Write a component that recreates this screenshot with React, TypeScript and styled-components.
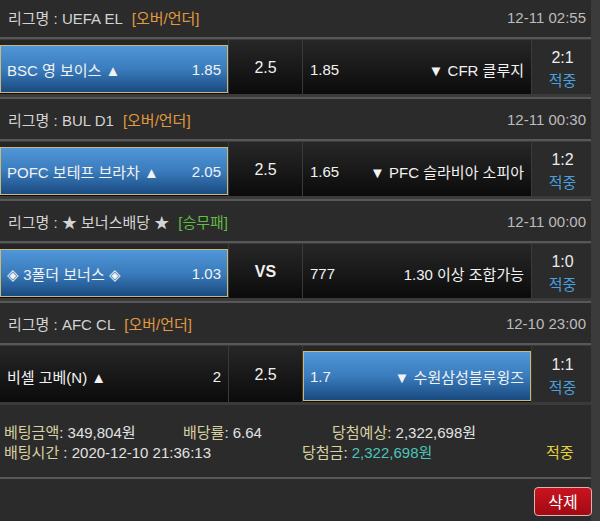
import React from "react";
import styled, { createGlobalStyle } from "styled-components";

const GlobalStyle = createGlobalStyle`
  html, body {
    margin: 0;
    padding: 0;
    background: #3b3b3b;
    overflow: hidden;
  }
  body {
    font-family: "Liberation Sans", "Noto Sans CJK KR", sans-serif;
  }
`;

type Side = "home" | "away" | "none";

interface Game {
  league: string;
  tag: string;
  tagColor: string;
  date: string;
  home: string;
  homeOdds: string;
  line: string;
  lineBold?: boolean;
  awayOdds: string;
  away: string;
  score: string;
  pick: Side;
}

const games: Game[] = [
  {
    league: "리그명 : UEFA EL",
    tag: "[오버/언더]",
    tagColor: "#e29a3f",
    date: "12-11 02:55",
    home: "BSC 영 보이스 ▲",
    homeOdds: "1.85",
    line: "2.5",
    awayOdds: "1.85",
    away: "▼ CFR 클루지",
    score: "2:1",
    pick: "home",
  },
  {
    league: "리그명 : BUL D1",
    tag: "[오버/언더]",
    tagColor: "#e29a3f",
    date: "12-11 00:30",
    home: "POFC 보테프 브라차 ▲",
    homeOdds: "2.05",
    line: "2.5",
    awayOdds: "1.65",
    away: "▼ PFC 슬라비아 소피아",
    score: "1:2",
    pick: "home",
  },
  {
    league: "리그명 : ★ 보너스배당 ★",
    tag: "[승무패]",
    tagColor: "#62bb45",
    date: "12-11 00:00",
    home: "◈ 3폴더 보너스 ◈",
    homeOdds: "1.03",
    line: "VS",
    lineBold: true,
    awayOdds: "777",
    away: "1.30 이상 조합가능",
    score: "1:0",
    pick: "home",
  },
  {
    league: "리그명 : AFC CL",
    tag: "[오버/언더]",
    tagColor: "#e29a3f",
    date: "12-10 23:00",
    home: "비셀 고베(N) ▲",
    homeOdds: "2",
    line: "2.5",
    awayOdds: "1.7",
    away: "▼ 수원삼성블루윙즈",
    score: "1:1",
    pick: "away",
  },
];

const Page = styled.div`
  width: 591px;
  margin-top: -3px;
  background: #2b2b2b;
  display: flex;
  flex-direction: column;
`;

const LeagueBar = styled.div`
  height: 40px;
  padding: 0 8px;
  display: flex;
  align-items: center;
  justify-content: space-between;
  font-size: 15px;
  color: #d4d4d4;
  border-bottom: 2px solid #585858;
`;

const LeagueName = styled.span`
  white-space: pre;
`;

const Tag = styled.span<{ $color: string }>`
  color: ${(p) => p.$color};
  margin-left: 9px;
`;

const DateText = styled.span`
  color: #bcbcbc;
  margin-right: -3px;
`;

const BetRow = styled.div<{ $last?: boolean }>`
  height: 60px;
  box-sizing: border-box;
  padding: 1px 0 3px;
  display: flex;
  gap: 1px;
  background: #3a3a3a;
  border-bottom: ${(p) => (p.$last ? "none" : "2px solid #585858")};
  & > :last-child {
    background: #2b2b2b;
  }
`;

const Cell = styled.div<{ $w: number }>`
  width: ${(p) => p.$w}px;
  flex: none;
  box-sizing: border-box;
  padding: 5px 0 1px;
  display: flex;
  background: linear-gradient(#272727, #0b0b0b);
`;

const Pick = styled.div<{ $on: boolean }>`
  flex: 1;
  display: flex;
  align-items: center;
  justify-content: space-between;
  padding: 0 6px;
  font-size: 15px;
  color: #f2f2f2;
  box-sizing: border-box;
  border: 1px solid ${(p) => (p.$on ? "#cdb976" : "transparent")};
  background: ${(p) =>
    p.$on ? "linear-gradient(#5096d8, #3a7cbd 50%, #1a4a80)" : "transparent"};
  white-space: nowrap;
`;

const LineText = styled.div<{ $bold?: boolean }>`
  flex: 1;
  display: flex;
  align-items: center;
  justify-content: center;
  font-size: 16px;
  font-weight: ${(p) => (p.$bold ? 700 : 400)};
  color: #f0f0f0;
  padding-bottom: 2px;
`;

const Result = styled.div`
  flex: 1;
  display: flex;
  flex-direction: column;
  align-items: center;
  justify-content: center;
  font-size: 16px;
  line-height: 23px;
  padding: 3px 0 0 2px;
  color: #ececec;
`;

const Hit = styled.span`
  color: #4a9fdc;
  font-size: 15px;
`;

const Summary = styled.div`
  padding: 18px 4px 14px;
  font-size: 15px;
  line-height: 20px;
  color: #e2e2e2;
  border-bottom: 2px solid #585858;
`;

const SummaryLine = styled.div`
  display: flex;
  white-space: nowrap;
`;

const Field = styled.span<{ $w?: number }>`
  width: ${(p) => (p.$w ? `${p.$w}px` : "auto")};
  flex: none;
`;

const Label = styled.span`
  color: #d8d1a1;
`;

const Teal = styled.span`
  color: #4ac5bb;
`;

const WinMark = styled.span`
  color: #e4d23c;
`;

const Footer = styled.div`
  height: 43px;
  display: flex;
  align-items: center;
  justify-content: flex-end;
  margin-right: -1px;
`;

const DeleteButton = styled.button`
  width: 58px;
  height: 29px;
  margin-top: 1px;
  border: 1px solid #d9b4b4;
  border-radius: 4px;
  background: linear-gradient(#c8141f, #a20a14);
  color: #ffffff;
  font-family: inherit;
  font-size: 16px;
  padding: 0;
`;

const GameBlock = ({ g, last }: { g: Game; last: boolean }) => (
  <>
    <LeagueBar>
      <LeagueName>
        {g.league}
        <Tag $color={g.tagColor}>{g.tag}</Tag>
      </LeagueName>
      <DateText>{g.date}</DateText>
    </LeagueBar>
    <BetRow $last={last}>
      <Cell $w={228}>
        <Pick $on={g.pick === "home"}>
          <span>{g.home}</span>
          <span>{g.homeOdds}</span>
        </Pick>
      </Cell>
      <Cell $w={73}>
        <LineText $bold={g.lineBold}>{g.line}</LineText>
      </Cell>
      <Cell $w={228}>
        <Pick $on={g.pick === "away"}>
          <span>{g.awayOdds}</span>
          <span>{g.away}</span>
        </Pick>
      </Cell>
      <Result>
        <span>{g.score}</span>
        <Hit>적중</Hit>
      </Result>
    </BetRow>
  </>
);

export default function App() {
  return (
    <>
      <GlobalStyle />
      <Page>
        {games.map((g, i) => (
          <GameBlock key={g.date} g={g} last={i === games.length - 1} />
        ))}
        <Summary>
          <SummaryLine>
            <Field $w={179}>
              <Label>베팅금액</Label>: 349,804원
            </Field>
            <Field $w={149}>
              <Label>배당률</Label>: 6.64
            </Field>
            <Field>
              <Label>당첨예상</Label>: 2,322,698원
            </Field>
          </SummaryLine>
          <SummaryLine>
            <Field $w={298}>
              <Label>배팅시간</Label> : 2020-12-10 21:36:13
            </Field>
            <Field $w={244}>
              <Label>당첨금</Label>: <Teal>2,322,698원</Teal>
            </Field>
            <WinMark>적중</WinMark>
          </SummaryLine>
        </Summary>
        <Footer>
          <DeleteButton>삭제</DeleteButton>
        </Footer>
      </Page>
    </>
  );
}
